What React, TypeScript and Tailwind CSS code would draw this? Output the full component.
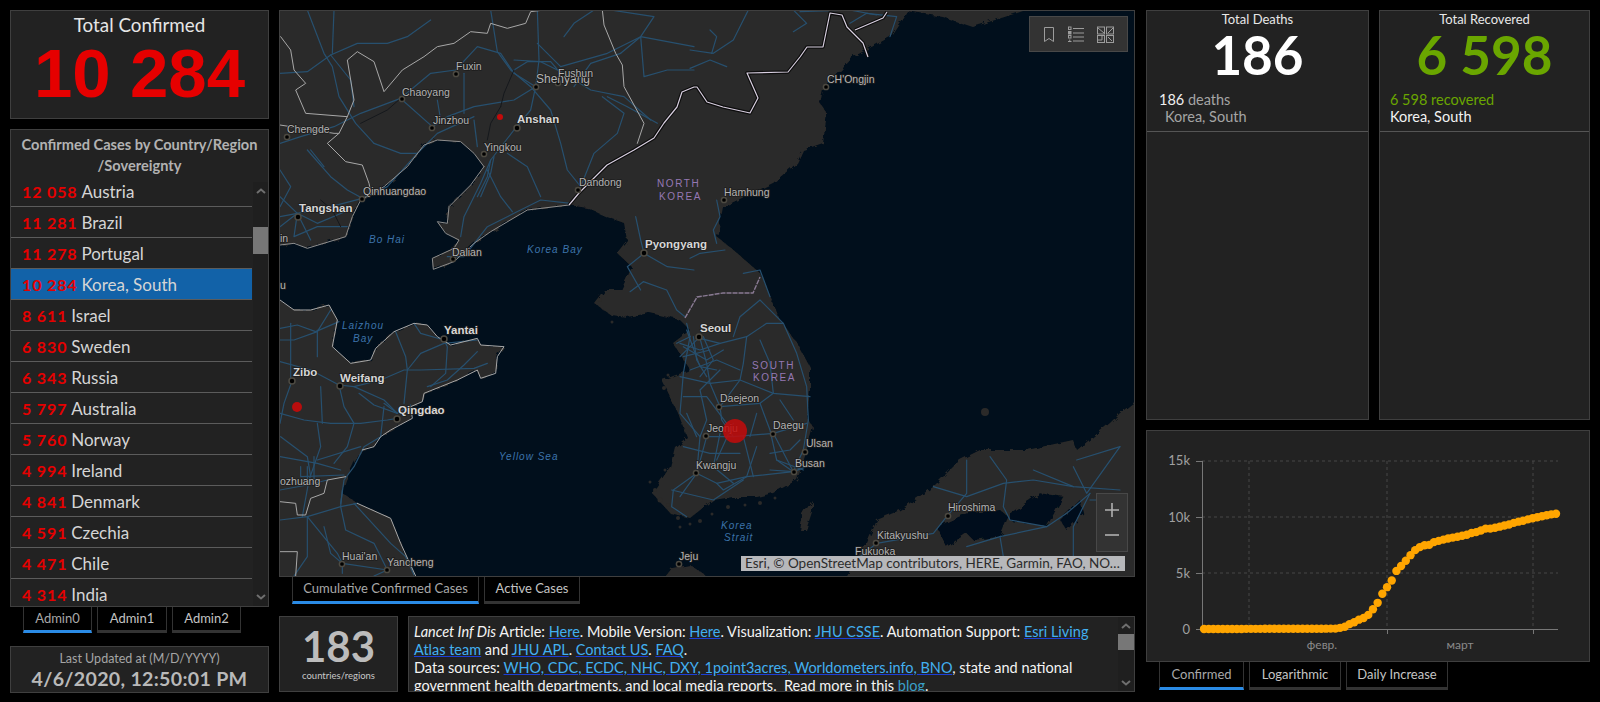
import React from "react";

const rows: [string, string][] = [
  ["12 058", "Austria"], ["11 281", "Brazil"], ["11 278", "Portugal"], ["10 284", "Korea, South"],
  ["8 611", "Israel"], ["6 830", "Sweden"], ["6 343", "Russia"], ["5 797", "Australia"],
  ["5 760", "Norway"], ["4 994", "Ireland"], ["4 841", "Denmark"], ["4 591", "Czechia"],
  ["4 471", "Chile"], ["4 314", "India"],
];

const series = [1,1,2,2,3,4,4,4,4,11,12,15,15,16,19,23,24,24,25,27,28,28,28,28,28,29,30,31,31,104,204,433,602,833,977,1261,1766,2337,3150,3736,4335,5186,5621,6088,6593,7041,7314,7478,7513,7755,7869,7979,8086,8162,8236,8320,8413,8565,8652,8799,8961,8961,9037,9137,9241,9332,9478,9583,9661,9786,9887,9976,10062,10156,10237,10284];

const Panel = ({ className = "", children }: { className?: string; children?: React.ReactNode }) => (
  <div className={`bg-[#222222] border border-[#3f3f3f] ${className}`}>{children}</div>
);

const Tab = ({ label, active, className }: { label: string; active?: boolean; className: string }) => (
  <div className={`h-full flex items-center justify-center text-[13px] bg-black border-x border-[#333333] ${active ? "border-b-[3px] border-b-[#2a8be6] text-[#a9a9a9]" : "border-b-[3px] border-b-[#333333] text-[#c4c4c4]"} ${className}`}>{label}</div>
);

const Chevron = ({ up }: { up?: boolean }) => (
  <svg width="10" height="6" viewBox="0 0 10 6" fill="none" stroke="#6f6f6f" strokeWidth="2">
    <path d={up ? "M1 5 L5 1.5 L9 5" : "M1 1 L5 4.5 L9 1"} />
  </svg>
);

const Link = ({ children }: { children: React.ReactNode }) => (
  <span className="text-[#42b0f0] underline decoration-[#1c3fd6]">{children}</span>
);

const G = ({ x, y, children }: { x: number; y: number; children: React.ReactNode }) => (
  <g transform={`translate(${x} ${y}) scale(${1 / 3})`}>{children}</g>
);

const Lines = ({ d, color, w = 3 }: { d: string[]; color: string; w?: number }) => (
  <>
    {d.map((p, i) => (
      <polyline key={i} points={p} fill="none" stroke={color} strokeWidth={w} strokeLinejoin="round" strokeLinecap="round" />
    ))}
  </>
);

const road = "#27506f";

const z6Roads = [
  "18,190 100,185 170,135 250,100 340,100 400,80 470,30",
  "170,135 230,210 240,290",
  "100,0 150,130 175,170 195,260 245,340 300,400",
  "180,0 175,130",
  "18,400 80,380 180,350 260,310 380,265 470,190 545,180 610,110 680,130 720,190 785,230",
  "385,270 475,350 520,320 600,290 720,270 785,230",
  "18,620 70,610 170,590 265,565 340,530 430,430 490,370 600,320",
  "650,0 670,125 710,180 770,230 830,300 860,400 880,480 920,530",
  "790,0 795,150 785,230 770,300 720,360 650,450 620,520 570,620 560,680",
  "790,100 860,170 1000,130 1100,80 1260,110",
  "870,80 900,40 960,0",
  "985,260 1050,310 1030,370 960,430 920,530",
  "1040,130 1100,80 1140,20 1010,0",
  "1100,80 1110,200 1180,180 1260,180",
  "720,150 800,155 870,190 950,240 1050,260 1130,330",
  "890,580 800,570 720,610 640,650 570,740 520,740",
  "640,480 680,560 715,605",
  "700,430 760,470 800,560",
  "490,270 500,330", "570,190 570,310", "600,330 610,410",
  "300,400 380,430 430,430", "100,420 170,500 220,540 265,565",
  "18,560 70,610 60,680 130,650 220,650", "70,610 130,640 225,600",
  "720,180 760,155 830,155 860,190", "1085,620 1100,690 1110,730 1060,770 1100,840", "1110,730 1180,770 1260,780",
  "18,480 50,530 18,590", "110,420 150,470", "650,450 640,500 610,560", "660,440 650,490 620,560",
  "1000,260 1060,290 1150,340", "900,230 950,160 1040,130", "18,650 70,610 110,690",
];

const z8Roads = [
  "18,115 70,105 125,125 195,95", "18,150 60,150 130,125 170,60", "50,100 50,270", "130,120 130,200",
  "18,215 110,240 195,285 240,290 320,270 390,240 440,240 600,235 640,220",
  "195,285 210,350 240,400 220,470 180,520", "510,150 520,170 515,250 470,290",
  "510,160 440,190 400,240 390,340", "365,125 395,200 400,240", "420,100 440,130 510,150", "510,160 610,150",
  "255,310 300,345 370,370", "240,290 330,330 370,370", "18,370 90,390 170,400 260,400 340,390 370,385",
  "18,500 130,520 200,540", "130,400 140,470 105,570 85,680", "20,440 60,470 100,500 110,560",
  "330,350 320,440 270,470 240,530 210,570 200,640", "130,510 260,470", "18,600 100,585 160,570",
  "18,690 100,680 200,650 250,640", "100,680 190,790 205,820 340,840", "205,600 200,650 215,720 300,760 340,840",
  "100,680 100,800 60,858", "150,710 170,790 205,820", "240,640 350,760 395,800 420,855",
  "80,530 80,560 210,555", "100,530 100,570", "120,500 120,570", "610,185 570,225 520,270 460,290",
  "330,340 370,370 410,345", "205,850 205,820", "340,840 300,858", "55,270 30,340 18,400", "140,290 145,400",
];

const z7Roads = [
  "300,175 320,250 330,310 360,380 365,420 400,470 520,460 580,575",
  "270,170 250,280 240,400 300,470 290,580 240,650",
  "440,170 430,250 420,300 360,380",
  "240,290 330,310 420,300 520,340 630,350",
  "360,380 480,370 520,340", "480,370 510,450 530,540 580,575", "520,460 620,430",
  "550,130 590,220 620,320 625,420 610,510 580,575", "480,180 510,250 520,340",
  "320,470 400,470", "320,470 290,580 350,610 440,590 580,575", "290,580 220,630 215,680 260,710",
  "350,610 370,630 440,590 470,500", "430,470 460,590", "240,190 300,210 360,190", "250,230 330,210",
  "260,150 300,260 350,270", "270,270 350,240 420,270", "510,570 580,575 620,560", "250,350 320,350 380,430",
  "215,630 340,660 430,600", "300,175 360,190 440,170 500,130 550,130 480,60 420,110 400,170",
  "130,5 200,30 230,90 255,110", "90,35 130,5", "260,130 270,170", "230,190 270,170",
  "360,270 300,330 320,420 300,470", "400,430 350,540", "260,400 290,470", "470,400 450,470", "540,360 580,420",
  "280,170 290,240 320,290", "310,170 340,240 300,290", "250,200 320,240 370,210", "240,230 300,170",
  "360,460 340,560 400,610", "250,500 330,520 420,520", "510,520 570,510 600,480", "530,540 610,570",
  "1000,620 1100,650 1210,610 1300,600 1420,620 1560,630", "1100,540 1100,640 1040,710 1000,760 830,790",
  "1170,530 1220,600 1210,680 1230,720 1340,740 1400,700 1470,640", "1420,560 1460,640 1560,500",
  "1300,570 1420,620", "1430,540 1560,500", "1200,770 1340,740", "1100,800 1200,770 1210,830",
  "1470,640 1420,740 1420,830", "1470,660 1560,660", "830,790 780,830",
];

const z9Roads = [
  "0,120 70,130 130,90 175,0", "0,175 60,150 110,170", "65,130 80,80 60,60", "310,0 350,40 310,65",
  "330,5 480,0 560,15", "480,40 530,10 620,20 600,80", "80,570 90,620 70,660 80,700", "105,720 30,730 0,745",
  "160,790 210,780 240,860",
];

const z6Prov = [
  "20,80 50,120 60,180 95,220 65,240 95,310 220,320 240,270 220,150 250,125 300,155 330,245 385,180 450,140 490,110 540,100 590,65 640,70 650,40 700,55 755,40 770,5 810,0",
  "220,320 195,370 160,400 215,455 265,465 285,520 290,545",
  "985,0 990,45 1025,130 1045,165 1050,230 1110,340 1090,400",
  "18,345 180,370 195,370",
];

const z8Prov = [
  "18,30 60,60 110,60 165,45 190,90 175,170 230,220 290,210 305,175 360,125 420,100 460,105 490,140 530,165 610,145 620,165 690,170 670,200 665,250 620,265 610,240 550,270 500,290 450,310 445,335 410,350 415,385 350,420 320,440 300,470 265,480",
  "215,560 160,570 150,610 110,625 95,675 70,675 65,640 18,635",
  "18,785 70,785 65,858",
  "250,640 350,685 380,760 425,858",
];

const z6Coast = [
  "18,705 60,700 100,715 215,680 235,620 260,570 330,530 400,470 450,405 490,390 560,395 600,430 630,470",
  "630,470 590,525 525,590 520,640 490,635 515,670 555,690 540,715 475,745 478,778 540,755 600,700 650,665 760,600 885,585",
];

const borderNK = "569,205 579,193 594,178 607,165 634,150 654,138 664,123 677,107 682,92 694,87 697,87 707,102 723,107 750,113 758,98 747,73 788,72 800,57 807,47 823,47 830,13 842,15 847,27 863,43 868,57";
const borderNK2 = "855,30 883,18 887,12";
const dmz = "685,318 697,297 723,293 753,293 760,277";

const landMain = "260,0 915,0 907,11 890,37 853,57 823,90 820,103 827,113 823,143 803,150 797,163 773,183 723,207 717,237 730,247 760,273 772,300 780,320 797,343 810,367 810,390 807,417 813,427 803,463 797,480 773,493 757,497 733,497 713,500 690,518 670,513 652,493 670,467 675,447 687,437 678,413 662,380 690,370 673,343 690,330 680,320 650,313 627,317 611,315 594,303 604,290 621,290 632,267 617,253 627,240 624,223 607,217 587,208 569,205 527,210 491,232 474,243 454,262 433,269 432,258 454,248 459,240 446,233 437,222 447,223 449,207 471,185 484,167 474,153 461,142 437,140 424,145 407,167 384,187 361,200 352,217 346,237 307,248 294,243 260,245";
const landShandong = "260,300 279,300 294,310 311,310 329,305 337,320 332,347 351,363 371,360 376,348 394,332 414,323 427,325 437,337 451,345 477,338 481,345 504,347 497,357 496,373 481,378 477,370 457,380 441,387 424,393 422,402 411,407 412,418 391,430 381,437 374,447 362,450 354,463 346,480 342,493 357,503 391,518 401,543 420,590 260,590";
const landJapan = "840,590 857,557 867,543 877,520 900,510 933,487 960,460 980,450 1027,450 1073,440 1077,450 1110,423 1120,413 1150,390 1150,590";
const landRussia = "907,0 907,11 943,17 973,27 1023,11 1030,0";

type L = [string, number, number, number?, boolean?, number?];
const bold: L[] = [
  ["Anshan", 517, 123, 517, true, 128], ["Tangshan", 299, 212, 298, true, 217], ["Pyongyang", 645, 248, 644, true, 253],
  ["Seoul", 700, 332, 699, true, 337], ["Zibo", 293, 376, 292, true, 381], ["Weifang", 340, 382, 340, true, 386],
  ["Yantai", 444, 334, 444, true, 339], ["Qingdao", 398, 414, 397, true, 419],
];
const mid: L[] = [
  ["Fuxin", 456, 70, 456, false, 74], ["Chaoyang", 402, 96, 402, false, 99], ["Jinzhou", 433, 124, 432, false, 128],
  ["Shenyang", 536, 83, 536, false, 87], ["Fushun", 558, 77, 558, false, 83], ["Yingkou", 484, 151, 484, false, 154],
  ["Dandong", 579, 186, 578, false, 190], ["Qinhuangdao", 363, 195, 362, false, 199], ["Dalian", 452, 256, 453, false, 259],
  ["Hamhung", 724, 196, 724, false, 200], ["CH'Ongjin", 827, 83, 826, false, 87], ["Daejeon", 720, 402, 719, false, 407],
  ["Jeonju", 707, 432, 706, false, 436], ["Daegu", 773, 429, 773, false, 434], ["Ulsan", 806, 447, 805, false, 452],
  ["Kwangju", 696, 469, 696, false, 473], ["Busan", 795, 467, 794, false, 472], ["Hiroshima", 948, 511, 948, false, 516],
  ["Kitakyushu", 877, 539, 876, false, 543], ["Fukuoka", 855, 555], ["Jeju", 679, 560, 679, false, 564],
  ["Huai'an", 342, 560, 342, false, 564], ["Yancheng", 387, 566, 387, false, 570], ["Chengde", 287, 133, 287, false, 137],
  ["ozhuang", 280, 485], ["in", 280, 242], ["u", 280, 289],
];
const water: [string, number, number][] = [
  ["Bo Hai", 369, 243], ["Korea Bay", 527, 253], ["Laizhou", 342, 329], ["Bay", 353, 342], ["Yellow Sea", 499, 460],
  ["Korea", 721, 529], ["Strait", 724, 541],
];
const purple: [string, number, number][] = [
  ["NORTH", 657, 187], ["KOREA", 659, 200], ["SOUTH", 752, 369], ["KOREA", 753, 381],
];
const islets: [number, number, number][] = [
  [655, 490, 2], [650, 482, 1.5], [660, 500, 2.5], [668, 505, 2], [678, 518, 2], [690, 524, 1.5], [700, 521, 2],
  [712, 514, 1.5], [728, 507, 2], [745, 505, 1.5], [760, 503, 2], [775, 498, 1.5], [664, 388, 2], [668, 375, 1.5],
  [600, 300, 2], [612, 322, 1.5], [680, 527, 1.5], [665, 470, 1.5],
];

function MapArt() {
  return (
    <svg viewBox="280 11 854 565" className="w-full h-full block font-['Liberation_Sans',Arial,sans-serif]">
      <defs>
        <filter id="rough" x="-5%" y="-5%" width="110%" height="110%">
          <feTurbulence type="fractalNoise" baseFrequency="0.12" numOctaves="3" seed="4" />
          <feDisplacementMap in="SourceGraphic" scale="6" />
        </filter>
      </defs>
      <rect x="270" y="0" width="880" height="590" fill="#010f1c" />
      <g filter="url(#rough)">
        <polygon points={landMain} fill="#2b2a29" />
        <polygon points={landRussia} fill="#2b2a29" />
        <polygon points={landShandong} fill="#2b2a29" />
        <polygon points={landJapan} fill="#2b2a29" />
        <polygon points="655,590 672,568 690,565 705,575 712,590" fill="#2b2a29" />
        <polygon points="800,530 803,515 812,500 812,512 806,530" fill="#2b2a29" />
        <G x={600} y={280}>
          <polygon points="1010,740 1100,700 1200,690 1225,710 1200,770 1120,780 1100,760 1040,800" fill="#010f1c" />
          <polygon points="1230,700 1320,640 1390,650 1340,740 1230,720" fill="#010f1c" />
          <polygon points="1380,720 1440,660 1450,700 1400,750" fill="#010f1c" />
        </G>
      </g>
      {islets.map(([x, y, r], i) => (
        <circle key={i} cx={x} cy={y} r={r} fill="#2b2a29" />
      ))}
      <circle cx="985" cy="412" r="4" fill="#2b2a29" />
      <G x={600} y={280}>
        <Lines d={z7Roads} color={road} w={3.6} />
      </G>
      <G x={274} y={10}>
        <Lines d={z6Roads} color={road} w={3.6} />
        <Lines d={["680,290 650,340 640,390", "260,340 340,300 380,265", "720,180 690,250 680,290", "140,570 175,600 200,650"]} color="#15181c" />
        <Lines d={z6Prov} color="#a8a8a8" />
        <Lines d={z6Coast} color="#8d8d8d" />
      </G>
      <G x={274} y={290}>
        <Lines d={z8Roads} color={road} w={3.6} />
        <Lines d={z8Prov} color="#a8a8a8" />
      </G>
      <G x={690} y={10}>
        <Lines d={z9Roads} color={road} w={3.6} />
      </G>
      <polyline points={borderNK} fill="none" stroke="#0c0c0c" strokeWidth="3.5" strokeLinejoin="round" />
      <polyline points={borderNK2} fill="none" stroke="#0c0c0c" strokeWidth="3.5" strokeLinejoin="round" />
      <polyline points={borderNK} fill="none" stroke="#d8cfe0" strokeWidth="1.2" strokeLinejoin="round" />
      <polyline points={borderNK2} fill="none" stroke="#d8cfe0" strokeWidth="1.2" strokeLinejoin="round" />
      <polyline points={dmz} fill="none" stroke="#8a7b94" strokeWidth="1.4" strokeDasharray="5 1" />

      {[...bold, ...mid].map(([t, , , dx, b, dy]) =>
        dx !== undefined && dy !== undefined ? (
          <circle key={`d${t}`} cx={dx} cy={dy} r={b ? 3 : 2.6} fill="#000" stroke="#4d4a42" strokeWidth="1.5" />
        ) : null
      )}
      {mid.map(([t, x, y]) => (
        <text key={t} x={x} y={y} fontSize={t === "Shenyang" ? 12 : 10.5} fill="#b4b4b4" stroke="#1d1d1d" strokeWidth="1.6" className="[paint-order:stroke]">{t}</text>
      ))}
      {bold.map(([t, x, y]) => (
        <text key={t} x={x} y={y} fontSize="11.5" fontWeight="700" fill="#d6d6d6" stroke="#1d1d1d" strokeWidth="1.6" className="[paint-order:stroke]">{t}</text>
      ))}
      {water.map(([t, x, y]) => (
        <text key={t + x} x={x} y={y} fontSize="10" fontStyle="italic" letterSpacing="1" fill="#3d74ab">{t}</text>
      ))}
      {purple.map(([t, x, y]) => (
        <text key={t + x} x={x} y={y} fontSize="10" letterSpacing="1.6" fill="#9578b4">{t}</text>
      ))}
      <circle cx="735" cy="431" r="12" fill="#c40a0a" fillOpacity="0.85" />
      <circle cx="500" cy="117" r="3" fill="#c40a0a" />
      <circle cx="297" cy="407" r="5" fill="#b80d0d" />
    </svg>
  );
}

function Chart() {
  const X = (i: number) => 1204 + (i * 352) / 75;
  const Y = (v: number) => 629 - (v / 15000) * 168;
  return (
    <svg viewBox="1147 431 442 230" className="w-full h-full block font-['Lato',sans-serif]">
      {[461, 517, 573].map((y) => (
        <line key={y} x1="1202" x2="1558" y1={y} y2={y} stroke="#464646" strokeDasharray="3 3" />
      ))}
      {[1249, 1387, 1533].map((x) => (
        <line key={x} x1={x} x2={x} y1="461" y2="629" stroke="#464646" strokeDasharray="3 3" />
      ))}
      <line x1="1202.5" x2="1202.5" y1="461" y2="629" stroke="#777" />
      <line x1="1196" x2="1558" y1="629.5" y2="629.5" stroke="#777" />
      {[461, 517, 573].map((y) => (
        <line key={y} x1="1196" x2="1202" y1={y + 0.5} y2={y + 0.5} stroke="#777" />
      ))}
      {[1387, 1533].map((x) => (
        <line key={x} x1={x + 0.5} x2={x + 0.5} y1="629" y2="634" stroke="#777" />
      ))}
      {[["15k", 465], ["10k", 522], ["5k", 578], ["0", 634]].map(([t, y]) => (
        <text key={t} x="1190" y={y} textAnchor="end" fontSize="13" fill="#a0a0a0">{t}</text>
      ))}
      <text x="1322" y="649" textAnchor="middle" fontSize="12" fill="#8a8a8a">февр.</text>
      <text x="1460" y="649" textAnchor="middle" fontSize="12" fill="#8a8a8a">март</text>
      {series.map((v, i) => (
        <circle key={i} cx={X(i)} cy={Y(v)} r="4.2" fill="#ffa500" />
      ))}
    </svg>
  );
}

export default function App() {
  return (
    <div className="w-[1600px] h-[702px] bg-black flex overflow-hidden font-['Lato','Noto_Sans',sans-serif] text-[#d8d8d8]">
      {/* Left column */}
      <div className="w-[259px] ml-[10px] mt-[10px] flex flex-col shrink-0">
        <Panel className="h-[109px] flex flex-col items-center">
          <div className="text-[18.8px] leading-[22px] mt-[3px] text-[#e6e6e6]">Total Confirmed</div>
          <div className="font-['Liberation_Sans',Arial,sans-serif] font-bold text-[69px] leading-[68px] mt-[4px] text-[#e60000]">10 284</div>
        </Panel>
        <Panel className="h-[478px] mt-[10px] flex flex-col overflow-hidden">
          <div className="h-[52px] shrink-0 text-center text-[14.6px] leading-[21px] font-bold text-[#b2b2b2] pt-[4px] whitespace-nowrap">
            Confirmed Cases by Country/Region
            <br />
            /Sovereignty
          </div>
          <div className="flex flex-1 min-h-0">
            <div className="w-[241px] overflow-hidden">
              <div className="-mt-[6px]">
                {rows.map(([n, c], i) => (
                  <div key={c} className={`h-[31px] box-border border-b border-[#5c5c5c] pl-[11px] pt-[1px] flex items-center gap-[4px] whitespace-nowrap ${i === 3 ? "bg-[#1262a8]" : ""}`}>
                    <span className="text-[16px] font-bold text-[#e60000] tracking-[0.85px]">{n}</span>
                    <span className="text-[17px] text-[#d5d5d5]">{c}</span>
                  </div>
                ))}
              </div>
            </div>
            <div className="w-[15px] ml-[1px] flex flex-col bg-[#1f1f1f]">
              <div className="h-[18px] flex items-center justify-center"><Chevron up /></div>
              <div className="h-[27px] mt-[27px] bg-[#777777]" />
              <div className="flex-1" />
              <div className="h-[18px] flex items-center justify-center"><Chevron /></div>
            </div>
          </div>
        </Panel>
        <div className="h-[26px] flex ml-[13px] gap-[5px]">
          <Tab label="Admin0" active className="w-[69px]" />
          <Tab label="Admin1" className="w-[70px]" />
          <Tab label="Admin2" className="w-[69px]" />
        </div>
        <Panel className="h-[47px] mt-[13px] flex flex-col items-center">
          <div className="text-[12.5px] leading-[18px] mt-[3px] text-[#a5a5a5]">Last Updated at (M/D/YYYY)</div>
          <div className="text-[19.6px] leading-[22px] font-bold text-[#b9b9b9] tracking-[0.3px]">4/6/2020, 12:50:01 PM</div>
        </Panel>
      </div>

      {/* Centre column */}
      <div className="w-[856px] ml-[10px] mt-[10px] flex flex-col shrink-0">
        <div className="relative h-[567px] border border-[#3f3f3f] overflow-hidden">
          <MapArt />
          <div className="absolute right-[6px] top-[5px] w-[99px] h-[36px] bg-[#333333] border border-[#484848] flex items-center justify-around px-[6px]">
            <svg width="12" height="17" viewBox="0 0 12 17" fill="none" stroke="#9c9c9c"><path d="M1.5 1.5H10.5V15.5L6 12.5L1.5 15.5Z" /></svg>
            <svg width="16" height="16" viewBox="0 0 16 16" fill="none" stroke="#9c9c9c">
              <path d="M5 2.5H16M5 7H16M5 11H16M5 15H16" />
              <rect x="0.5" y="1" width="2.5" height="2.5" /><rect x="0.5" y="5.5" width="2.5" height="2.5" fill="#9c9c9c" /><rect x="0.5" y="9.5" width="2.5" height="2.5" /><path d="M0 15.5H3.5M1.8 13.5V15" />
            </svg>
            <svg width="17" height="17" viewBox="0 0 17 17" fill="none" stroke="#9c9c9c">
              <rect x="0.5" y="1" width="7" height="7" /><rect x="9.5" y="1" width="7" height="7" /><rect x="0.5" y="9.5" width="7" height="7" /><rect x="9.5" y="9.5" width="7" height="7" />
              <path d="M1 2L7 7M11 7L16 2M1 14H5V10M11 11L15 15" />
            </svg>
          </div>
          <div className="absolute right-[6px] top-[482px] w-[32px] h-[59px] bg-[#333333] border border-[#484848] flex flex-col items-center justify-around py-[4px]">
            <svg width="14" height="14" viewBox="0 0 14 14" stroke="#b0b0b0" strokeWidth="1.6"><path d="M0 7H14M7 0V14" /></svg>
            <svg width="14" height="14" viewBox="0 0 14 14" stroke="#b0b0b0" strokeWidth="1.6"><path d="M0 7H14" /></svg>
          </div>
          <div className="absolute right-[9px] top-[545px] w-[384px] h-[15px] bg-[#b7b8bb] text-[#2c2c2c] text-[13.5px] leading-[15px] pl-[4px] whitespace-nowrap overflow-hidden">
            Esri, © OpenStreetMap contributors, HERE, Garmin, FAO, NO…
          </div>
        </div>
        <div className="h-[27px] flex ml-[13px] gap-[5px] shrink-0">
          <Tab label="Cumulative Confirmed Cases" active className="w-[187px]" />
          <Tab label="Active Cases" className="w-[96px]" />
        </div>
        <div className="flex mt-[12px] gap-[10px] h-[76px]">
          <Panel className="w-[119px] flex flex-col items-center">
            <div className="text-[42px] leading-[44px] mt-[7px] font-bold text-[#bcbcbc]">183</div>
            <div className="text-[9.5px] leading-[12px] mt-[2px] text-[#c8c8c8]">countries/regions</div>
          </Panel>
          <Panel className="flex-1 flex overflow-hidden">
            <div className="flex-1 pl-[5px] pt-[6px] text-[14.5px] leading-[18px] text-[#f4f4f4] whitespace-nowrap overflow-hidden">
              <i>Lancet Inf Dis</i> Article: <Link>Here</Link>. Mobile Version: <Link>Here</Link>. Visualization: <Link>JHU CSSE</Link>. Automation Support: <Link>Esri Living</Link>
              <br />
              <Link>Atlas team</Link> and <Link>JHU APL</Link>. <Link>Contact US</Link>. <Link>FAQ</Link>.
              <br />
              Data sources: <Link>WHO, CDC, ECDC, NHC, DXY, 1point3acres, Worldometers.info, BNO</Link>, state and national
              <br />
              government health departments, and local media reports.&nbsp; Read more in this <span className="text-[#3aa0c8]">blog</span>.
            </div>
            <div className="w-[16px] flex flex-col bg-[#1f1f1f]">
              <div className="h-[17px] flex items-center justify-center"><Chevron up /></div>
              <div className="h-[16px] bg-[#777777]" />
              <div className="flex-1" />
              <div className="h-[17px] flex items-center justify-center"><Chevron /></div>
            </div>
          </Panel>
        </div>
      </div>

      {/* Right column */}
      <div className="w-[444px] ml-[11px] mt-[10px] flex flex-col shrink-0">
        <div className="flex gap-[10px] h-[410px]">
          <Panel className="w-[223px] flex flex-col">
            <div className="h-[121px] border-b border-[#555555] shrink-0 flex flex-col">
              <div className="text-center text-[13px] leading-[16px] text-[#e8e8e8]">Total Deaths</div>
              <div className="text-center text-[53px] leading-[46px] mt-[5px] text-white font-bold">186</div>
              <div className="pl-[12px] text-[14.5px] leading-[17px] mt-[13px] text-[#a5a5a5]"><span className="text-[#f0f0f0]">186</span> deaths</div>
              <div className="pl-[18px] text-[14.5px] leading-[17px] text-[#a5a5a5]">Korea, South</div>
            </div>
          </Panel>
          <Panel className="w-[211px] flex flex-col">
            <div className="h-[121px] border-b border-[#555555] shrink-0 flex flex-col">
              <div className="text-center text-[13px] leading-[16px] text-[#e8e8e8]">Total Recovered</div>
              <div className="text-center text-[53px] leading-[46px] mt-[5px] text-[#6aa600] font-bold">6 598</div>
              <div className="pl-[10px] text-[14.5px] leading-[17px] mt-[13px] text-[#6aa600]">6 598 recovered</div>
              <div className="pl-[10px] text-[14.5px] leading-[17px] text-[#f2f2f2]">Korea, South</div>
            </div>
          </Panel>
        </div>
        <Panel className="h-[232px] mt-[10px]">
          <Chart />
        </Panel>
        <div className="h-[28px] flex ml-[13px] gap-[5px]">
          <Tab label="Confirmed" active className="w-[85px]" />
          <Tab label="Logarithmic" className="w-[92px]" />
          <Tab label="Daily Increase" className="w-[102px]" />
        </div>
      </div>
    </div>
  );
}
